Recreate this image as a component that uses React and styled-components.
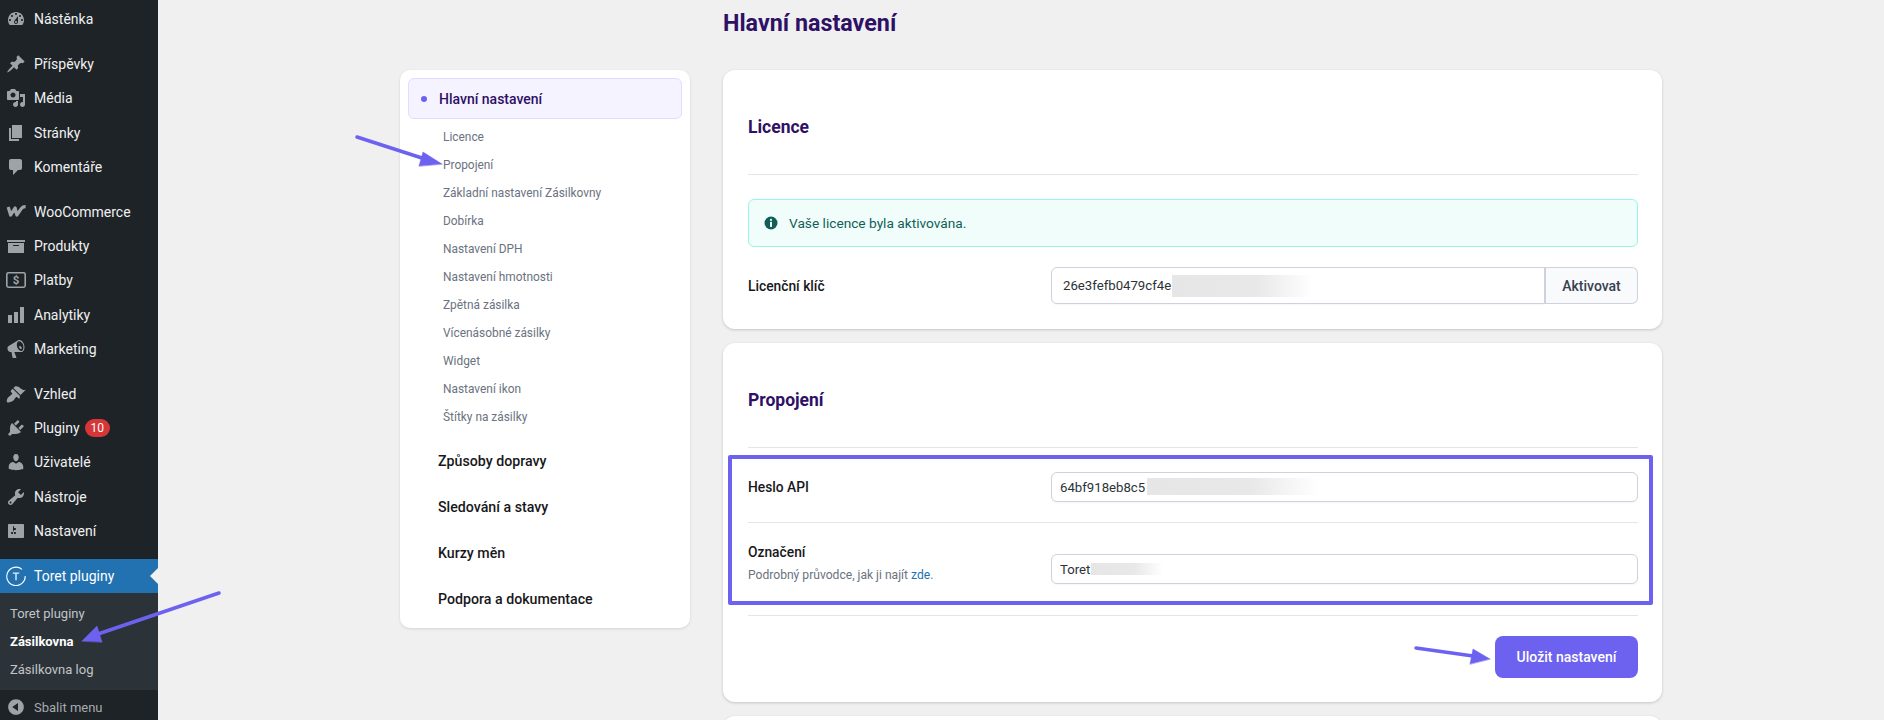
import React from 'react';
import styled, { createGlobalStyle } from 'styled-components';

const ICONS = {
  dashboard: 'M3.76 16h12.48c1.1-1.37 1.76-3.11 1.76-5 0-4.42-3.58-8-8-8s-8 3.58-8 8c0 1.89.66 3.63 1.76 5zM10 4c.55 0 1 .45 1 1s-.45 1-1 1-1-.45-1-1 .45-1 1-1zM6 6c.55 0 1 .45 1 1s-.45 1-1 1-1-.45-1-1 .45-1 1-1zm8 0c.55 0 1 .45 1 1s-.45 1-1 1-1-.45-1-1 .45-1 1-1zm-5.37 5.55L12 7v6c0 1.1-.9 2-2 2s-2-.9-2-2c0-.57.24-1.08.63-1.45zM4 10c.55 0 1 .45 1 1s-.45 1-1 1-1-.45-1-1 .45-1 1-1zm12 0c.55 0 1 .45 1 1s-.45 1-1 1-1-.45-1-1 .45-1 1-1zm-5 3c0-.55-.45-1-1-1s-1 .45-1 1 .45 1 1 1 1-.45 1-1z',
  post: 'M10.44 3.02l1.82-1.82 6.36 6.35-1.83 1.82c-1.05-.68-2.48-.57-3.41.36l-.75.75c-.92.93-1.04 2.35-.35 3.41l-1.83 1.82-2.41-2.41-2.8 2.79c-.42.42-3.38 2.71-3.8 2.29s1.86-3.39 2.28-3.81l2.79-2.79L4.1 9.36l1.83-1.82c1.05.69 2.48.57 3.4-.36l.75-.75c.93-.92 1.05-2.35.36-3.41z',
  media: 'M13 11V4c0-.55-.45-1-1-1h-1.67L9 1H5L3.67 3H2c-.55 0-1 .45-1 1v7c0 .55.45 1 1 1h10c.55 0 1-.45 1-1zM7 4.5c1.38 0 2.5 1.12 2.5 2.5S8.38 9.5 7 9.5 4.5 8.38 4.5 7 5.62 4.5 7 4.5zM14 6h5v10.5c0 1.38-1.12 2.5-2.5 2.5S14 17.88 14 16.5s1.12-2.5 2.5-2.5c.17 0 .34.02.5.05V9h-3V6zm-4 8.05V13h2v3.5c0 1.38-1.12 2.5-2.5 2.5S7 17.88 7 16.5 8.12 14 9.5 14c.17 0 .34.02.5.05z',
  page: 'M6 15V2h10v13H6zm-1 1h8v2H3V5h2v11z',
  comments: 'M5 2h9c1.1 0 2 .9 2 2v7c0 1.1-.9 2-2 2h-2l-5 5v-5H5c-1.1 0-2-.9-2-2V4c0-1.1.9-2 2-2z',
  archive: 'M19 4v2H1V4h18zM2 7h16v10H2V7zm11 3V9H7v1h6z',
  chart: 'M18 18V2h-4v16h4zm-6 0V7H8v11h4zm-6 0v-8H2v8h4z',
  megaphone: 'M18.15 5.94c.46 1.62.38 3.22-.02 4.48-.42 1.28-1.26 2.18-2.3 2.48-.16.06-.26.06-.4.06-.06.02-.12.02-.18.02-.06.02-.14.02-.22.02h-6.8l2.22 5.5c.02.14-.06.26-.14.34-.08.1-.24.16-.34.16H6.95c-.1 0-.26-.06-.34-.16-.08-.08-.16-.2-.14-.34l-1-5.5H4.25l-.02-.02c-.5.06-1.08-.18-1.54-.62s-.88-1.08-1.06-1.88c-.24-.8-.2-1.56-.02-2.2.18-.62.58-1.08 1.06-1.3l.02-.02 9-5.4c.1-.06.18-.1.24-.16.06-.04.14-.08.24-.12.16-.08.28-.12.5-.18 1.04-.3 2.24.1 3.22 1 .98.88 1.84 2.24 2.26 3.86zm-2.58 5.98h-.02c.4-.1.74-.34 1.04-.7.58-.7.86-1.76.86-3.04-.02-.64-.1-1.3-.3-1.98-.2-.66-.48-1.3-.84-1.84-.34-.58-.78-1.04-1.26-1.42-.96-.72-1.98-.96-2.82-.44-.36.2-.66.5-.88.88-.46.76-.66 1.86-.5 3.1.08.62.24 1.28.52 1.92.26.66.62 1.24 1.02 1.76.42.52.88.94 1.36 1.24.48.32.98.48 1.46.52.12.02.24.02.36 0zm-.28-1.98c.54-.28.56-1.14.06-1.94-.48-.8-1.28-1.24-1.82-.98-.52.26-.56 1.14-.08 1.94.5.8 1.3 1.24 1.84.98z',
  appearance: 'M14.48 11.06L7.41 3.99l1.5-1.5c.5-.56 2.3-.47 3.51.32 1.21.8 1.43 1.28 2.91 2.1 1.18.64 2.45 1.26 4.45.85zm-.71.71L6.7 4.7 4.93 6.47c-.39.39-.39 1.02 0 1.41l1.06 1.06c.39.39.39 1.03 0 1.42-.6.6-1.43 1.11-2.21 1.69-.35.26-.7.53-1.01.84C1.43 13.23.16 17.2 1.12 18.16c.97.96 4.93-.31 6.27-1.65.31-.31.58-.66.85-1.02.57-.78 1.08-1.61 1.69-2.21.39-.39 1.02-.39 1.41 0l1.06 1.06c.39.39 1.02.39 1.41 0z',
  plugins: 'M13.11 4.36L9.87 7.6 8 5.73l3.24-3.24c.35-.34 1.05-.2 1.56.32.52.51.66 1.21.31 1.55zm-8 1.77l.91-1.12 9.01 9.01-1.19.84c-.71.71-2.63 1.16-3.82 1.16H6.14L4.9 17.26c-.59.59-1.54.59-2.12 0-.59-.58-.59-1.53 0-2.12l1.24-1.24v-3.88c0-1.13.4-3.19 1.09-3.89zm7.26 3.97l3.24-3.24c.34-.35 1.04-.21 1.55.31.52.51.66 1.21.31 1.55l-3.24 3.25z',
  users: 'M10 9.25c-2.27 0-2.73-3.44-2.73-3.44C7 4.02 7.82 2 9.97 2c2.16 0 2.98 2.02 2.71 3.81 0 0-.41 3.44-2.68 3.44zm0 2.57L12.72 10c2.39 0 4.52 2.33 4.52 4.53v2.49s-3.65 1.13-7.24 1.13c-3.65 0-7.24-1.13-7.24-1.13v-2.49c0-2.25 1.94-4.48 4.47-4.48z',
  tools: 'M16.68 9.77c-1.34 1.34-3.3 1.67-4.95.99l-5.41 6.52c-.99.99-2.59.99-3.58 0s-.99-2.59 0-3.57l6.52-5.42c-.68-1.65-.35-3.61.99-4.95 1.28-1.28 3.12-1.62 4.72-1.06l-2.89 2.89 2.82 2.82 2.86-2.87c.53 1.58.18 3.39-1.08 4.65zM3.81 16.21c.4.39 1.04.39 1.43 0 .4-.4.4-1.04 0-1.43-.39-.4-1.03-.4-1.43 0-.39.39-.39 1.03 0 1.43z',
  settings: 'M18 16V4c0-.55-.45-1-1-1H3c-.55 0-1 .45-1 1v12c0 .55.45 1 1 1h14c.55 0 1-.45 1-1zM8 11h1c.55 0 1 .45 1 1s-.45 1-1 1H8v1.5c0 .28-.22.5-.5.5s-.5-.22-.5-.5V13H6c-.55 0-1-.45-1-1s.45-1 1-1h1V5.5c0-.28.22-.5.5-.5s.5.22.5.5V7h1c.55 0 1 .45 1 1s-.45 1-1 1h-1v5.5c0 .28-.22.5-.5.5s-.5-.22-.5-.5V9z',
  collapse: 'M10 2.16c4.33 0 7.84 3.51 7.84 7.84s-3.51 7.84-7.84 7.84S2.16 14.33 2.16 10 5.71 2.16 10 2.16zm2 11.72V6.12L6.18 9.97z',
};

const GlobalStyle = createGlobalStyle`
  html, body {
    margin: 0;
    padding: 0;
    background: #f0f0f1;
  }
  body {
    font-family: Roboto, "Noto Sans", sans-serif;
  }
  * {
    box-sizing: border-box;
  }
`;

const Page = styled.div`
  position: relative;
  display: flex;
  width: 1884px;
  height: 720px;
  overflow: hidden;
  background: #f0f0f1;
`;

const Sidebar = styled.aside`
  flex: 0 0 158px;
  padding-top: 2px;
  background: #1d2327;
  display: flex;
  flex-direction: column;
  gap: 11px;
`;

const MenuGroup = styled.div`
  display: flex;
  flex-direction: column;
`;

const MenuItem = styled.div`
  position: relative;
  display: flex;
  align-items: center;
  height: 34.2px;
  padding-left: 6px;
  font-size: 14px;
  color: ${p => (p.$active ? '#fff' : '#f0f0f1')};
  background: ${p => (p.$active ? '#2271b1' : 'transparent')};
  ${p => p.$active && `
    &::after {
      content: '';
      position: absolute;
      right: 0;
      top: 9px;
      border: 8px solid transparent;
      border-right-color: #f0f0f1;
      border-left-width: 0;
    }
  `}
`;

const MenuIcon = styled.svg`
  flex: 0 0 20px;
  width: 20px;
  height: 20px;
  margin-right: 8px;
  fill: #9ea3a8;
`;

const Badge = styled.span`
  display: inline-block;
  height: 18px;
  margin-left: 5px;
  padding: 0 6px;
  border-radius: 9px;
  background: #d63638;
  color: #fff;
  font-size: 12px;
  line-height: 18px;
`;

const SubMenu = styled.div`
  display: flex;
  flex-direction: column;
  padding: 7px 0 6px;
  background: #2c3338;
`;

const SubItem = styled.div`
  height: 28px;
  padding-left: 10px;
  font-size: 13px;
  line-height: 28px;
  font-weight: ${p => (p.$current ? 700 : 400)};
  color: ${p => (p.$current ? '#fff' : '#c3c4c7')};
`;

const Collapse = styled(MenuItem)`
  color: #a7aaad;
  font-size: 13px;
`;

const Main = styled.main`
  flex: 1;
  padding-left: 242px;
`;

const PageHeading = styled.h1`
  margin: 0;
  height: 70px;
  padding: 8px 0 0 323px;
  font-size: 23.3px;
  line-height: 30px;
  font-weight: 700;
  color: #2e1065;
`;

const Columns = styled.div`
  display: flex;
  align-items: flex-start;
  gap: 33px;
`;

const Nav = styled.nav`
  flex: 0 0 290px;
  height: 558px;
  padding: 8px;
  background: #fff;
  border-radius: 10px;
  box-shadow: 0 1px 3px rgba(0, 0, 0, 0.12);
`;

const NavActive = styled.div`
  display: flex;
  align-items: center;
  gap: 12px;
  height: 41px;
  padding-left: 12px;
  margin-bottom: 4px;
  background: #f5f3ff;
  border: 1px solid #e3dcfe;
  border-radius: 6px;
  font-size: 14px;
  font-weight: 500;
  color: #2e1065;
`;

const NavDot = styled.span`
  width: 6px;
  height: 6px;
  border-radius: 50%;
  background: #6d62ef;
`;

const NavSub = styled.div`
  height: 28px;
  padding-left: 35px;
  font-size: 11.9px;
  line-height: 28px;
  color: #6b7280;
`;

const NavSection = styled.div`
  height: 46px;
  padding-left: 30px;
  font-size: 14.2px;
  line-height: 46px;
  font-weight: 500;
  color: #18181b;
  &:first-of-type {
    margin-top: 7px;
  }
`;

const Content = styled.div`
  flex: 0 0 939px;
  display: flex;
  flex-direction: column;
  gap: 14px;
`;

const Card = styled.section`
  padding: 0 24px 24px 25px;
  background: #fff;
  border-radius: 12px;
  box-shadow: 0 1px 3px rgba(0, 0, 0, 0.18);
  min-height: ${p => p.$minHeight || 0}px;
`;

const CardTitle = styled.h2`
  margin: 0;
  height: 105px;
  padding-top: 44px;
  border-bottom: 1px solid #e5e5e8;
  font-size: 17.5px;
  line-height: 26px;
  font-weight: 700;
  color: #2e1065;
`;

const Alert = styled.div`
  display: flex;
  align-items: center;
  gap: 11px;
  height: 48px;
  margin-top: 24px;
  padding-left: 15px;
  background: #f0fdfa;
  border: 1px solid #99f6e4;
  border-radius: 6px;
  font-size: 13.7px;
  color: #115e59;
`;

const Row = styled.div`
  display: flex;
  align-items: ${p => p.$align || 'center'};
  padding: ${p => p.$padding};
  border-bottom: ${p => (p.$divider ? '1px solid #e5e5e8' : 'none')};
`;

const RowLabel = styled.div`
  flex: 0 0 303px;
`;

const LabelText = styled.div`
  font-size: 13.8px;
  line-height: 18px;
  font-weight: 500;
  color: #18181b;
`;

const LabelHint = styled.div`
  margin-top: 6px;
  font-size: 12.1px;
  line-height: 17px;
  color: #6b7280;
  a {
    color: #2271b1;
    text-decoration: none;
  }
`;

const InputWrap = styled.div`
  position: relative;
  flex: 1;
  display: flex;
`;

const TextInput = styled.input`
  flex: 1;
  min-width: 0;
  height: ${p => p.$height}px;
  padding: 0 ${p => p.$pad}px;
  border: 1px solid #d1d1dd;
  border-radius: ${p => (p.$joined ? '6px 0 0 6px' : '6px')};
  background: #fff;
  font-family: inherit;
  font-size: 13.2px;
  color: #2c3338;
  outline: none;
  box-shadow: 0 1px 2px rgba(0, 0, 0, 0.04);
`;

const Redaction = styled.span`
  position: absolute;
  left: ${p => p.$left}px;
  top: ${p => p.$top}px;
  width: ${p => p.$width}px;
  height: ${p => p.$h}px;
  background: linear-gradient(90deg, #e6e6e6 0%, #e8e8e8 60%, rgba(240, 240, 240, 0) 100%);
`;

const JoinedButton = styled.button`
  flex: 0 0 94px;
  height: 37px;
  margin-left: -1px;
  border: 1px solid #d1d1dd;
  border-left-width: 2px;
  border-radius: 0 6px 6px 0;
  background: #f9fafb;
  font-family: inherit;
  font-size: 14px;
  font-weight: 500;
  color: #374151;
`;

const Footer = styled.div`
  display: flex;
  justify-content: flex-end;
  padding-top: 20px;
`;

const SaveButton = styled.button`
  width: 143px;
  height: 42px;
  border: none;
  border-radius: 8px;
  background: #6d62ef;
  font-family: inherit;
  font-size: 14px;
  font-weight: 500;
  color: #fff;
`;

const Rows = styled.div`
  position: relative;
`;

const HighlightFrame = styled.div`
  position: absolute;
  top: 7px;
  left: -20px;
  right: -15px;
  height: 150px;
  border: 4px solid #6d62ef;
  border-radius: 2px;
  pointer-events: none;
`;

const Annotations = styled.svg`
  position: absolute;
  inset: 0;
  pointer-events: none;
`;

const Icon = ({ name }) => (
  <MenuIcon viewBox="0 0 20 20">
    <path d={ICONS[name]} />
  </MenuIcon>
);

const WooIcon = () => (
  <MenuIcon viewBox="0 0 20 20">
    <path
      d="M2.2 5 4.6 13 9.2 6 10.8 13 15.5 6.4C16.5 5 18 4.6 19.6 4.6"
      fill="none"
      stroke="#9ea3a8"
      strokeWidth="3.2"
      strokeLinejoin="round"
    />
  </MenuIcon>
);

const PaymentsIcon = () => (
  <MenuIcon viewBox="0 0 20 20">
    <rect x="0.8" y="2.8" width="18.4" height="14.4" rx="1.6" fill="none" stroke="#9ea3a8" strokeWidth="1.6" />
    <text x="10" y="14.2" textAnchor="middle" fontSize="11.5" fontWeight="700" fontFamily="Roboto, sans-serif">$</text>
  </MenuIcon>
);

const ToretIcon = () => (
  <MenuIcon viewBox="0 0 20 20">
    <path d="M16 3.4A9.2 9.2 0 1 0 19.2 10" fill="none" stroke="#fff" strokeWidth="1.1" />
    <path fill="#e8edf2" d="M6.8 6.5h6.4v1.3h-2.5v6.5H9.3V7.8H6.8z" />
  </MenuIcon>
);

const InfoIcon = () => (
  <svg width="14" height="14" viewBox="0 0 14 14">
    <circle cx="7" cy="7" r="6.5" fill="#115e59" />
    <circle cx="7" cy="3.9" r="1.1" fill="#f0fdfa" />
    <rect x="6" y="5.9" width="2" height="5" fill="#f0fdfa" />
  </svg>
);

const menuGroups = [
  [{ icon: 'dashboard', label: 'Nástěnka' }],
  [
    { icon: 'post', label: 'Příspěvky' },
    { icon: 'media', label: 'Média' },
    { icon: 'page', label: 'Stránky' },
    { icon: 'comments', label: 'Komentáře' },
  ],
  [
    { custom: <WooIcon />, label: 'WooCommerce' },
    { icon: 'archive', label: 'Produkty' },
    { custom: <PaymentsIcon />, label: 'Platby' },
    { icon: 'chart', label: 'Analytiky' },
    { icon: 'megaphone', label: 'Marketing' },
  ],
  [
    { icon: 'appearance', label: 'Vzhled' },
    { icon: 'plugins', label: 'Pluginy', badge: '10' },
    { icon: 'users', label: 'Uživatelé' },
    { icon: 'tools', label: 'Nástroje' },
    { icon: 'settings', label: 'Nastavení' },
  ],
];

const navSubs = [
  'Licence',
  'Propojení',
  'Základní nastavení Zásilkovny',
  'Dobírka',
  'Nastavení DPH',
  'Nastavení hmotnosti',
  'Zpětná zásilka',
  'Vícenásobné zásilky',
  'Widget',
  'Nastavení ikon',
  'Štítky na zásilky',
];

const navSections = ['Způsoby dopravy', 'Sledování a stavy', 'Kurzy měn', 'Podpora a dokumentace'];

export default function App() {
  return (
    <Page>
      <GlobalStyle />
      <Sidebar>
        {menuGroups.map((group, i) => (
          <MenuGroup key={i}>
            {group.map(item => (
              <MenuItem key={item.label}>
                {item.custom || <Icon name={item.icon} />}
                {item.label}
                {item.badge && <Badge>{item.badge}</Badge>}
              </MenuItem>
            ))}
          </MenuGroup>
        ))}
        <MenuGroup>
          <MenuItem $active>
            <ToretIcon />
            Toret pluginy
          </MenuItem>
          <SubMenu>
            <SubItem>Toret pluginy</SubItem>
            <SubItem $current>Zásilkovna</SubItem>
            <SubItem>Zásilkovna log</SubItem>
          </SubMenu>
          <Collapse>
            <Icon name="collapse" />
            Sbalit menu
          </Collapse>
        </MenuGroup>
      </Sidebar>

      <Main>
        <PageHeading>Hlavní nastavení</PageHeading>
        <Columns>
          <Nav>
            <NavActive>
              <NavDot />
              Hlavní nastavení
            </NavActive>
            {navSubs.map(label => (
              <NavSub key={label}>{label}</NavSub>
            ))}
            <div>
              {navSections.map(label => (
                <NavSection key={label}>{label}</NavSection>
              ))}
            </div>
          </Nav>

          <Content>
            <Card>
              <CardTitle>Licence</CardTitle>
              <Alert>
                <InfoIcon />
                Vaše licence byla aktivována.
              </Alert>
              <Row $padding="20px 0 1px">
                <RowLabel>
                  <LabelText>Licenční klíč</LabelText>
                </RowLabel>
                <InputWrap>
                  <TextInput readOnly value="26e3fefb0479cf4e" $height={37} $pad={11} $joined />
                  <JoinedButton>Aktivovat</JoinedButton>
                  <Redaction $left={121} $top={8} $width={141} $h={22} />
                </InputWrap>
              </Row>
            </Card>

            <Card>
              <CardTitle>Propojení</CardTitle>
              <Rows>
                <Row $padding="24px 0 20px" $divider>
                  <RowLabel>
                    <LabelText>Heslo API</LabelText>
                  </RowLabel>
                  <InputWrap>
                    <TextInput readOnly value="64bf918eb8c5" $height={30} $pad={8} />
                    <Redaction $left={96} $top={6} $width={172} $h={17} />
                  </InputWrap>
                </Row>
                <Row $padding="20px 0 31px" $align="flex-end" $divider>
                  <RowLabel>
                    <LabelText>Označení</LabelText>
                    <LabelHint>
                      Podrobný průvodce, jak ji najít <a href="#zde">zde</a>.
                    </LabelHint>
                  </RowLabel>
                  <InputWrap>
                    <TextInput readOnly value="Toret" $height={30} $pad={8} />
                    <Redaction $left={40} $top={9} $width={72} $h={12} />
                  </InputWrap>
                </Row>
                <HighlightFrame />
              </Rows>
              <Footer>
                <SaveButton>Uložit nastavení</SaveButton>
              </Footer>
            </Card>

            <Card $minHeight={120} />
          </Content>
        </Columns>
      </Main>

      <Annotations width="1884" height="720" viewBox="0 0 1884 720">
        <g fill="#6d62ef" stroke="#6d62ef" strokeLinecap="round">
          <line x1="357" y1="137" x2="425" y2="159" strokeWidth="3.5" />
          <polygon points="442,164 423,152 419,166" strokeWidth="0.5" />
          <line x1="219" y1="593" x2="98" y2="634" strokeWidth="3.5" />
          <polygon points="82,641 97,626 102,642" strokeWidth="0.5" />
          <line x1="1416" y1="648" x2="1473" y2="656" strokeWidth="3.5" />
          <polygon points="1490,659 1473,649 1470,664" strokeWidth="0.5" />
        </g>
      </Annotations>
    </Page>
  );
}
